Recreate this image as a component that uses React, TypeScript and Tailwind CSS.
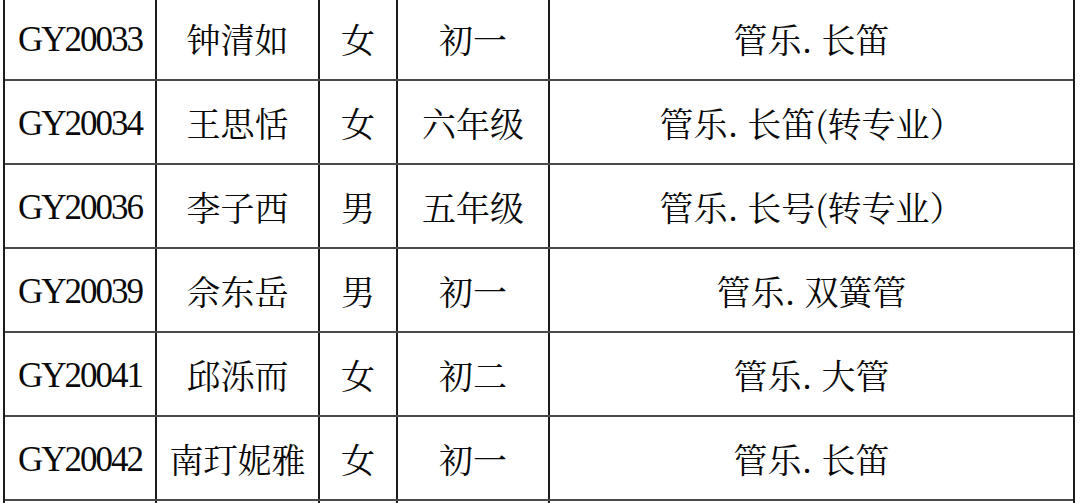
import React from "react";

const rows: [string, string, string, string, string][] = [
  ["GY20033", "钟清如", "女", "初一", "管乐. 长笛"],
  ["GY20034", "王思恬", "女", "六年级", "管乐. 长笛(转专业）"],
  ["GY20036", "李子西", "男", "五年级", "管乐. 长号(转专业）"],
  ["GY20039", "佘东岳", "男", "初一", "管乐. 双簧管"],
  ["GY20041", "邱泺而", "女", "初二", "管乐. 大管"],
  ["GY20042", "南玎妮雅", "女", "初一", "管乐. 长笛"],
  ["", "", "", "", ""],
];

export default function App() {
  return (
    <div className="w-[1080px] h-[503px] overflow-hidden bg-white">
      <div className="ml-[3px] w-[1072px] -mt-[3px] border-l-2 border-r-2 border-[#1c1c1c] text-[#0a0a0a]">
        {rows.map((r, i) => (
          <div
            key={i}
            className="flex h-[84px] border-b-2 border-[#4a4a4a] leading-none font-['Noto_Serif_CJK_SC','Noto_Sans_CJK_SC',serif] text-[34px]"
          >
            <div className="w-[152px] shrink-0 flex items-center justify-center border-r-2 border-[#1c1c1c] pt-[3px] font-['Liberation_Serif',serif] text-[35px] tracking-[-2px]">
              {r[0]}
            </div>
            <div className="w-[163px] shrink-0 flex items-center justify-center border-r-2 border-[#1c1c1c] pt-[1px]">
              {r[1]}
            </div>
            <div className="w-[78px] shrink-0 flex items-center justify-center border-r-2 border-[#1c1c1c] pt-[1px]">
              {r[2]}
            </div>
            <div className="w-[152px] shrink-0 flex items-center justify-center border-r-2 border-[#1c1c1c] pt-[1px]">
              {r[3]}
            </div>
            <div className="flex-1 flex items-center justify-center whitespace-pre pt-[1px]">
              {r[4]}
            </div>
          </div>
        ))}
      </div>
    </div>
  );
}
